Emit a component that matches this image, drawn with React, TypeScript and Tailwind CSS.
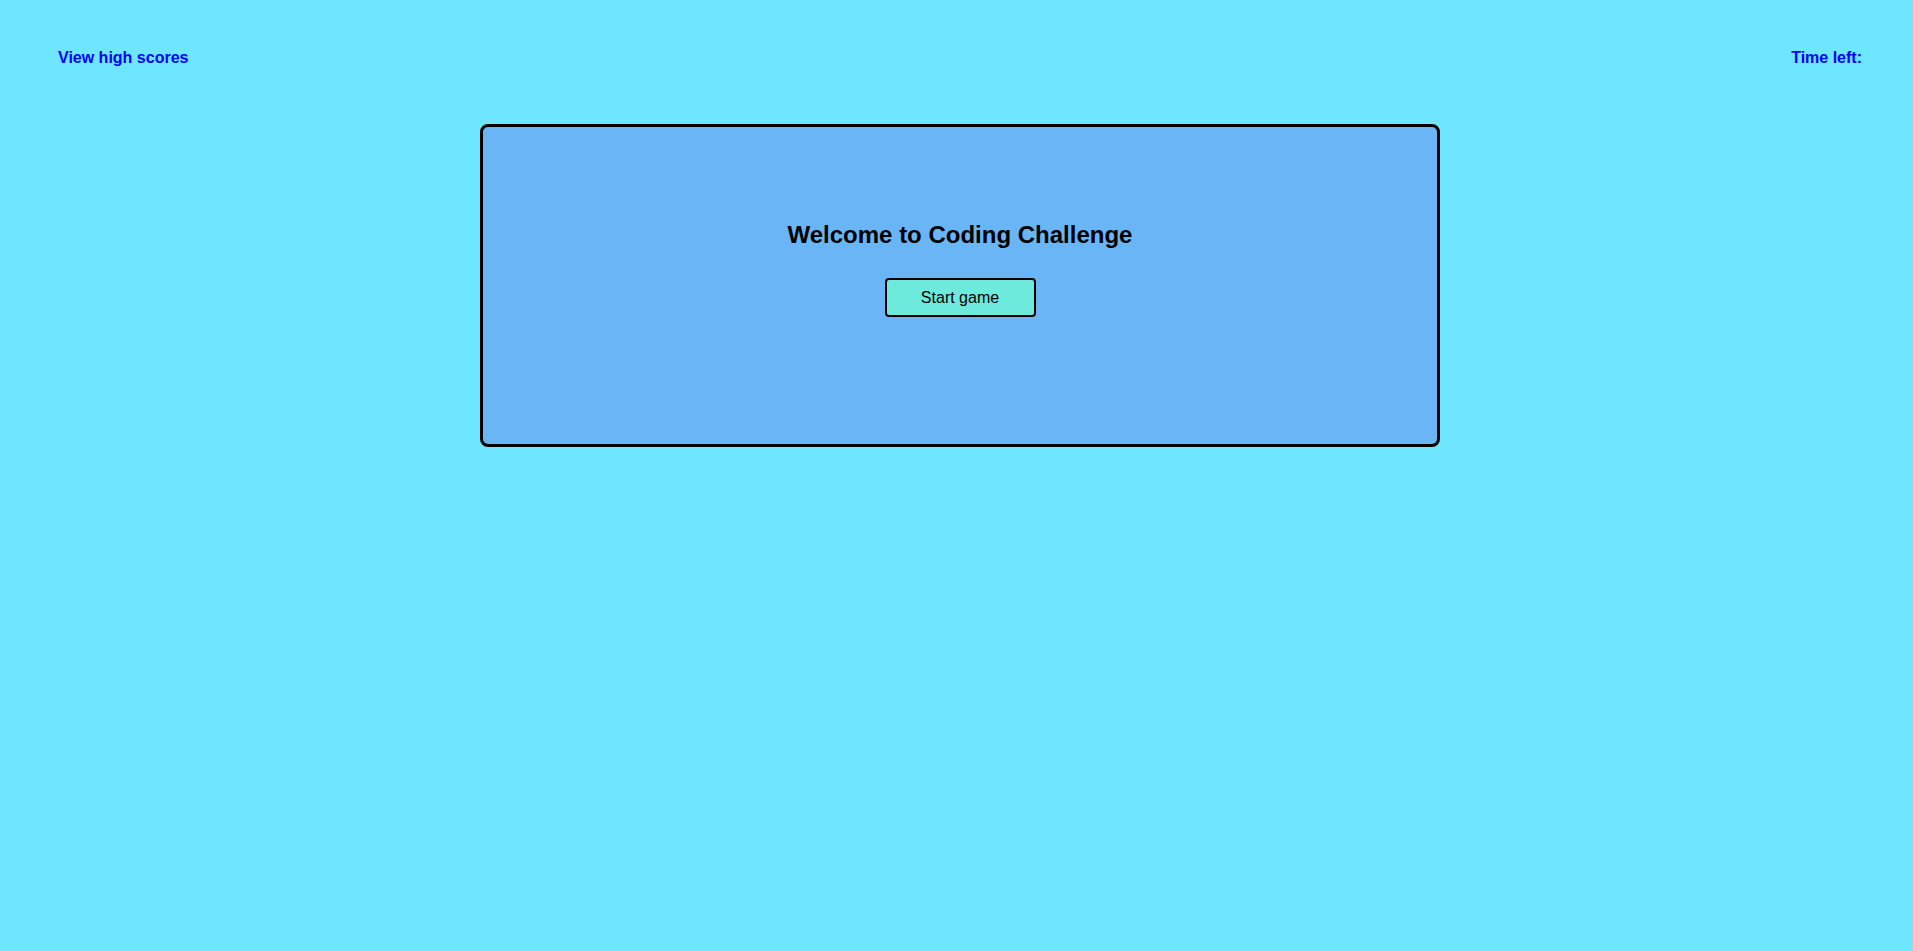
export default function App() {
    return (
        <div className="min-h-[951px] w-full bg-[#6ee6ff] font-['Liberation_Sans',Arial,sans-serif]">
            <header className="flex items-start justify-between pt-[49px] pl-[58px] pr-[51px]">
                <a href="#" className="text-base font-bold leading-[18px] text-[#0000ff]">
                    View high scores
                </a>
                <div className="text-base font-bold leading-[18px] text-[#0000ff]">Time left:</div>
            </header>

            <main className="mt-[57px] flex justify-center pl-[7px]">
                <div className="flex h-[323px] w-[960px] flex-col items-center rounded-lg border-[3px] border-black bg-[#69b5f5] pt-[94px]">
                    <h1 className="text-2xl font-bold leading-[28px] text-black">Welcome to Coding Challenge</h1>
                    <button className="mt-[29px] h-[39px] w-[151px] rounded-[4px] border-2 border-black bg-[#6eeadc] text-base text-black">
                        Start game
                    </button>
                </div>
            </main>
        </div>
    );
}
